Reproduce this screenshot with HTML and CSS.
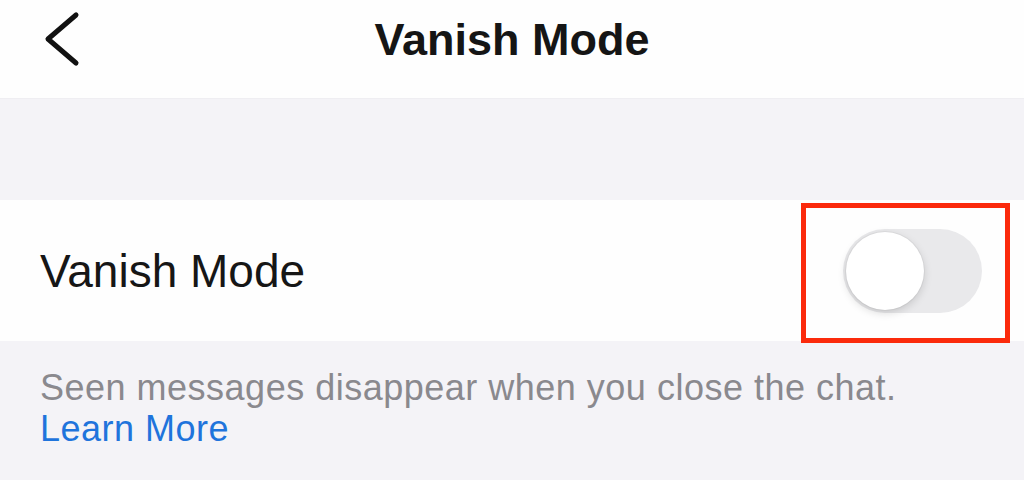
FILE: index.html
```html
<!DOCTYPE html>
<html lang="en">
<head>
    <meta charset="UTF-8">
    <meta name="viewport" content="width=device-width, initial-scale=1.0">
    <title>Vanish Mode</title>
    <link rel="stylesheet" href="styles.css">
</head>
<body>
    <div class="header">
        <div class="navbar">
            <a class="back" href="#">
                <svg width="36" height="56" viewBox="0 0 36 56">
                    <path d="M32 4 L4 28 L32 52" fill="none" stroke="#111" stroke-width="5" stroke-linecap="round" stroke-linejoin="round"/>
                </svg>
            </a>
            <h1 class="navbar-title">Vanish Mode</h1>
            <span></span>
        </div>
    </div>

    <div class="spacer"></div>

    <div class="setting-row">
        <span class="setting-label">Vanish Mode</span>
        <label class="switch">
            <input type="checkbox">
            <span class="knob"></span>
        </label>
        <!-- red box marking the switch -->
        <div class="highlight"></div>
    </div>

    <div class="setting-note">
        <p>Seen messages disappear when you close the chat.</p>
        <a href="#">Learn More</a>
    </div>
</body>
</html>
```

FILE: styles.css
```css
body {
    margin: 0;
    font-family: "Liberation Sans", Arial, sans-serif;
    background-color: #f4f3f7;
    color: #111;
    height: 480px;
    overflow: hidden;
}

.header {
    background-color: #fefefe;
    padding-bottom: 20px;
    border-bottom: 1px solid #efeef2;
}

.navbar {
    height: 78px;
    display: grid;
    grid-template-columns: 1fr auto 1fr;
    align-items: center;
}

.back {
    display: flex;
    padding-left: 44px;
}

.navbar-title {
    margin: 0;
    font-size: 45px;
    line-height: 1;
    font-weight: 700;
    color: #151515;
}

.spacer {
    height: 101px;
}

.setting-row {
    position: relative;
    height: 141px;
    background-color: #fefefe;
    display: flex;
    align-items: center;
    justify-content: space-between;
    padding: 0 42px 0 40px;
}

.setting-label {
    font-size: 46px;
    line-height: 1;
    color: #161616;
}

.switch {
    position: relative;
    width: 139px;
    height: 84px;
    border-radius: 42px;
    background-color: #e9e9eb;
}

.switch input {
    display: none;
}

.knob {
    position: absolute;
    top: 3px;
    left: 3px;
    width: 78px;
    height: 78px;
    border-radius: 50%;
    background-color: #fff;
    box-shadow: 0 3px 8px rgba(0, 0, 0, 0.15), 0 0 0 1px rgba(0, 0, 0, 0.04);
}

.highlight {
    position: absolute;
    top: 3px;
    right: 14px;
    width: 199px;
    height: 130px;
    border: 5px solid #fb2a0c;
}

.setting-note {
    padding: 26px 40px 0;
    font-size: 36px;
    line-height: 41px;
    letter-spacing: 0.5px;
}

.setting-note p {
    margin: 0;
    color: #8a898e;
}

.setting-note a {
    color: #1f74dc;
    text-decoration: none;
}
```
